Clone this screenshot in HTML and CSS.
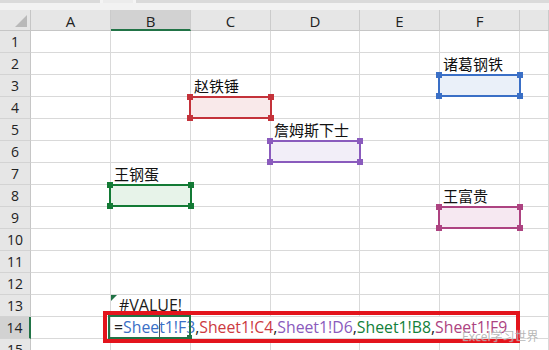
FILE: index.html
```html
<!DOCTYPE html>
<html lang="zh">
<head>
<meta charset="utf-8">
<title>Sheet</title>
<link rel="stylesheet" href="styles.css">
</head>
<body>
<div class="app">
  <div class="topbar">
    <div class="seg seg-name"></div>
    <div class="seg seg-btns"></div>
    <div class="seg seg-fx"></div>
  </div>
  <div class="gap-band"></div>
  <div class="sheet">
    <div class="corner"><span class="tri"></span></div>
    <div class="ch">A</div><div class="ch sel">B</div><div class="ch">C</div><div class="ch">D</div><div class="ch">E</div><div class="ch">F</div><div class="ch"></div>

    <div class="rh">1</div><div class="cell"></div><div class="cell"></div><div class="cell"></div><div class="cell"></div><div class="cell"></div><div class="cell"></div><div class="cell"></div>

    <div class="rh">2</div><div class="cell"></div><div class="cell"></div><div class="cell"></div><div class="cell"></div><div class="cell"></div><div class="cell cjk">诸葛钢铁</div><div class="cell"></div>

    <div class="rh">3</div><div class="cell"></div><div class="cell"></div><div class="cell cjk">赵铁锤</div><div class="cell"></div><div class="cell"></div><div class="cell"><span class="ref ref-blue"><i class="h tl"></i><i class="h tr"></i><i class="h bl"></i><i class="h br"></i></span></div><div class="cell"></div>

    <div class="rh">4</div><div class="cell"></div><div class="cell"></div><div class="cell"><span class="ref ref-red"><i class="h tl"></i><i class="h tr"></i><i class="h bl"></i><i class="h br"></i></span></div><div class="cell"></div><div class="cell"></div><div class="cell"></div><div class="cell"></div>

    <div class="rh">5</div><div class="cell"></div><div class="cell"></div><div class="cell"></div><div class="cell cjk">詹姆斯下士</div><div class="cell"></div><div class="cell"></div><div class="cell"></div>

    <div class="rh">6</div><div class="cell"></div><div class="cell"></div><div class="cell"></div><div class="cell"><span class="ref ref-purple wide"><i class="h tl"></i><i class="h tr"></i><i class="h bl"></i><i class="h br"></i></span></div><div class="cell"></div><div class="cell"></div><div class="cell"></div>

    <div class="rh">7</div><div class="cell"></div><div class="cell cjk">王钢蛋</div><div class="cell"></div><div class="cell"></div><div class="cell"></div><div class="cell"></div><div class="cell"></div>

    <div class="rh">8</div><div class="cell"></div><div class="cell"><span class="ref ref-green"><i class="h tl"></i><i class="h tr"></i><i class="h bl"></i><i class="h br"></i></span></div><div class="cell"></div><div class="cell"></div><div class="cell"></div><div class="cell cjk">王富贵</div><div class="cell"></div>

    <div class="rh">9</div><div class="cell"></div><div class="cell"></div><div class="cell"></div><div class="cell"></div><div class="cell"></div><div class="cell"><span class="ref ref-magenta"><i class="h tl"></i><i class="h tr"></i><i class="h bl"></i><i class="h br"></i></span></div><div class="cell"></div>

    <div class="rh">10</div><div class="cell"></div><div class="cell"></div><div class="cell"></div><div class="cell"></div><div class="cell"></div><div class="cell"></div><div class="cell"></div>

    <div class="rh">11</div><div class="cell"></div><div class="cell"></div><div class="cell"></div><div class="cell"></div><div class="cell"></div><div class="cell"></div><div class="cell"></div>

    <div class="rh">12</div><div class="cell"></div><div class="cell"></div><div class="cell"></div><div class="cell"></div><div class="cell"></div><div class="cell"></div><div class="cell"></div>

    <div class="rh">13</div><div class="cell"></div><div class="cell error">#VALUE!</div><div class="cell"></div><div class="cell"></div><div class="cell"></div><div class="cell"></div><div class="cell"></div>

    <div class="rh sel">14</div><div class="cell"></div>
    <div class="cell editor"><span class="active"><i class="fill"></i></span><span class="annot"></span><span class="k">=</span><span class="c-blue">Shee<span class="caret"></span>t1!F3</span><span class="k">,</span><span class="c-red">Sheet1!C4</span><span class="k">,</span><span class="c-purple">Sheet1!D6</span><span class="k">,</span><span class="c-green">Sheet1!B8</span><span class="k">,</span><span class="c-magenta">Sheet1!F9</span></div>
    <div class="cell"></div>

    <div class="rh">15</div><div class="cell"></div><div class="cell"></div><div class="cell"></div><div class="cell"></div><div class="cell"></div><div class="cell"></div><div class="cell"></div>
  </div>
  <div class="watermark">Excel学习世界</div>
</div>
</body>
</html>
```

FILE: styles.css
```css
* { box-sizing: border-box; margin: 0; padding: 0; }
html, body { width: 549px; height: 350px; overflow: hidden; background: #fff; }
body { font-family: "Open Sans", "Noto Sans CJK SC", sans-serif; color: #1a1a1a; }

.app { position: relative; width: 549px; height: 350px; overflow: hidden; background: #fff; }

.topbar { display: flex; gap: 3px; height: 3px; background: #f4f4f4; }
.seg { height: 3px; background: #dadada; }
.seg-name { width: 100px; }
.seg-btns { width: 30px; background: #ececec; }
.seg-fx { flex: 1; }
.gap-band { height: 7px; background: #f2f2f2; }

.sheet {
  display: grid;
  grid-template-columns: 31px 80px 80px 80px 89px 80px 80px 29px;
  grid-template-rows: 21px repeat(15, 22px);
}

.corner {
  background: #e6e6e6;
  border-right: 1px solid #c6c6c6;
  border-bottom: 1px solid #c6c6c6;
  position: relative;
}
.tri {
  position: absolute;
  right: 3px;
  bottom: 3px;
  width: 0; height: 0;
  border-left: 12px solid transparent;
  border-bottom: 12px solid #b9b9b9;
}

.ch {
  background: #e6e6e6;
  border-right: 1px solid #cbcbcb;
  border-bottom: 1px solid #c6c6c6;
  text-align: center;
  font-size: 15px;
  line-height: 20px;
  padding-top: 1px;
  color: #222;
}
.ch.sel { background: #d2d2d2; border-bottom: 2px solid #217346; }

.rh {
  background: #e6e6e6;
  border-right: 1px solid #c6c6c6;
  border-bottom: 1px solid #d3d3d3;
  text-align: center;
  font-size: 14px;
  line-height: 21px;
  color: #222;
}
.rh.sel { background: #d2d2d2; border-right: 2px solid #217346; }

.cell {
  position: relative;
  border-right: 1px solid #d9d9d9;
  border-bottom: 1px solid #d9d9d9;
  font-size: 15px;
  line-height: 21px;
  padding-left: 3px;
  white-space: nowrap;
}
.cjk { font-family: "Noto Sans CJK SC", sans-serif; color: #111; }

.error { text-align: center; padding-left: 0; font-size: 16px; line-height: 20px; }
.error::before {
  content: "";
  position: absolute;
  left: 0; top: 0;
  width: 0; height: 0;
  border-top: 6px solid #217346;
  border-right: 6px solid transparent;
}

.ref {
  position: absolute;
  left: -2px;
  top: -1px;
  width: 83px;
  height: 23px;
  border: 2px solid currentColor;
  z-index: 2;
}
.ref.wide { width: 92px; }
.h {
  position: absolute;
  width: 6px;
  height: 6px;
  background: currentColor;
}
.h.tl { left: -4px; top: -4px; }
.h.tr { right: -4px; top: -4px; }
.h.bl { left: -4px; bottom: -4px; }
.h.br { right: -4px; bottom: -4px; }

.ref-blue { color: #3a6fc6; background: #eaf0f9; }
.ref-red { color: #c4323a; background: #f9e9ea; }
.ref-purple { color: #8a5bbd; background: #f2eef8; }
.ref-green { color: #137a35; background: #e7f3e9; }
.ref-magenta { color: #ad4381; background: #f6e8f1; }

.editor {
  grid-column: 3 / span 5;
  background: #fff;
  font-size: 15.8px;
  padding-left: 3px;
  z-index: 3;
}
.k { color: #222; }
.c-blue { color: #3a6fc6; }
.c-red { color: #cc3a3f; }
.c-purple { color: #8a5bbd; }
.c-green { color: #13813a; }
.c-magenta { color: #ad4381; }

.caret {
  display: inline-block;
  width: 1px;
  height: 24px;
  margin-right: -1px;
  vertical-align: top;
  margin-top: -2px;
  background: #555;
}

.active {
  position: absolute;
  left: -3px;
  top: -2px;
  width: 83px;
  height: 24px;
  border: 2px solid #217346;
}
.fill {
  position: absolute;
  right: -3px;
  bottom: -3px;
  width: 5px;
  height: 5px;
  background: #217346;
}
.annot {
  position: absolute;
  left: -8px;
  top: -6px;
  width: 417px;
  height: 32px;
  border: 4px solid #e3141c;
  z-index: 4;
}

.watermark {
  position: absolute;
  left: 462px;
  top: 330px;
  font-size: 12px;
  line-height: 14px;
  color: rgba(120, 120, 120, 0.55);
  text-shadow: 0 0 1px #fff;
  z-index: 10;
  white-space: nowrap;
}
```
